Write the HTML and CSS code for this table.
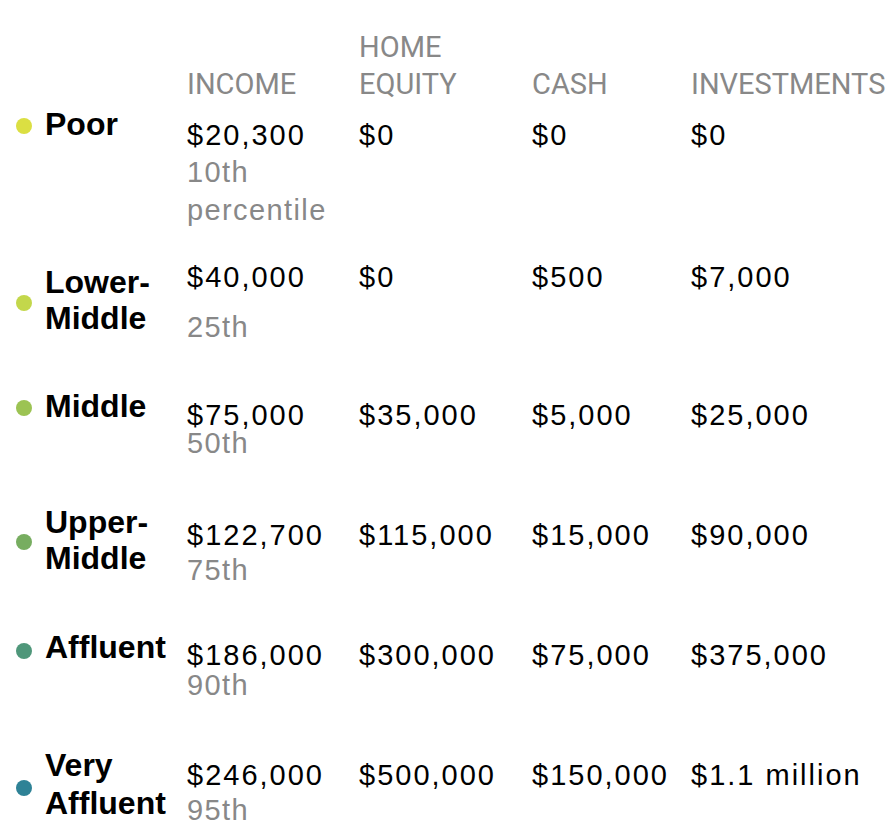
FILE: index.html
```html
<!DOCTYPE html>
<html lang="en">
<head>
<meta charset="utf-8">
<title>Wealth by class</title>
<link rel="stylesheet" href="styles.css">
</head>
<body>
<div class="table">
  <div class="row head">
    <div></div>
    <div class="th">INCOME</div>
    <div class="th">HOME EQUITY</div>
    <div class="th">CASH</div>
    <div class="th">INVESTMENTS</div>
  </div>

  <div class="row r1">
    <div class="label-cell"><span class="dot c1"></span><span class="name">Poor</span></div>
    <div class="cell"><div class="val">$20,300</div><div class="pct">10th percentile</div></div>
    <div class="cell"><div class="val">$0</div></div>
    <div class="cell"><div class="val">$0</div></div>
    <div class="cell"><div class="val">$0</div></div>
  </div>

  <div class="row r2">
    <div class="label-cell"><span class="dot c2"></span><span class="name">Lower-Middle</span></div>
    <div class="cell"><div class="val">$40,000</div><div class="pct">25th</div></div>
    <div class="cell"><div class="val">$0</div></div>
    <div class="cell"><div class="val">$500</div></div>
    <div class="cell"><div class="val">$7,000</div></div>
  </div>

  <div class="row r3">
    <div class="label-cell"><span class="dot c3"></span><span class="name">Middle</span></div>
    <div class="cell"><div class="val">$75,000</div><div class="pct">50th</div></div>
    <div class="cell"><div class="val">$35,000</div></div>
    <div class="cell"><div class="val">$5,000</div></div>
    <div class="cell"><div class="val">$25,000</div></div>
  </div>

  <div class="row r4">
    <div class="label-cell"><span class="dot c4"></span><span class="name">Upper-Middle</span></div>
    <div class="cell"><div class="val">$122,700</div><div class="pct">75th</div></div>
    <div class="cell"><div class="val">$115,000</div></div>
    <div class="cell"><div class="val">$15,000</div></div>
    <div class="cell"><div class="val">$90,000</div></div>
  </div>

  <div class="row r5">
    <div class="label-cell"><span class="dot c5"></span><span class="name">Affluent</span></div>
    <div class="cell"><div class="val">$186,000</div><div class="pct">90th</div></div>
    <div class="cell"><div class="val">$300,000</div></div>
    <div class="cell"><div class="val">$75,000</div></div>
    <div class="cell"><div class="val">$375,000</div></div>
  </div>

  <div class="row r6">
    <div class="label-cell"><span class="dot c6"></span><span class="name">Very Affluent</span></div>
    <div class="cell"><div class="val">$246,000</div><div class="pct">95th</div></div>
    <div class="cell"><div class="val">$500,000</div></div>
    <div class="cell"><div class="val">$150,000</div></div>
    <div class="cell"><div class="val">$1.1 million</div></div>
  </div>
</div>
</body>
</html>
```
FILE: styles.css
```css
html, body {
  margin: 0;
  padding: 0;
  background: #fff;
}
body {
  font-family: "Liberation Sans", Arial, sans-serif;
  color: #000;
  overflow: hidden;
}
.table {
  width: 896px;
}
.row {
  display: grid;
  grid-template-columns: 187px 172px 173px 159px 1fr;
  align-items: start;
  box-sizing: border-box;
}
.head {
  padding-top: 29px;
  height: 103px;
  align-items: end;
}
.th {
  font-family: Roboto, "Liberation Sans", sans-serif;
  font-size: 29px;
  line-height: 37px;
  color: #888;
}
.label-cell {
  display: flex;
  align-items: center;
}
.dot {
  flex: none;
  width: 16px;
  height: 16px;
  border-radius: 50%;
  margin-left: 16px;
  margin-right: 13px;
  margin-top: 4px;
}
.c1 { background: #dbdf42; }
.c2 { background: #c3d74b; }
.c3 { background: #9cc353; }
.c4 { background: #77ad60; }
.c5 { background: #4f977a; }
.c6 { background: #2e8296; }
.name {
  font-weight: 700;
  font-size: 32px;
  line-height: 36px;
  color: #000;
}
.val {
  font-size: 29px;
  line-height: 36px;
  letter-spacing: 2px;
  color: #000;
  white-space: nowrap;
}
.pct {
  font-size: 29px;
  line-height: 38px;
  letter-spacing: 1.4px;
  color: #888;
  width: 150px;
}

.r1 { height: 156px; }
.r1 .label-cell { margin-top: 3px; }
.r1 .cell { margin-top: 14px; }

.r2 { height: 129px; }
.r2 .label-cell { margin-top: 5px; }
.r2 .pct { margin-top: 13px; }
.r2 .dot { margin-top: 6px; }

.r3 { height: 116px; }
.r3 .cell { margin-top: 9px; }
.r3 .pct { margin-top: -9px; }

.r4 { height: 125px; }
.r4 .cell { margin-top: 13px; }
.r4 .pct { margin-top: -2px; }

.r5 { height: 117px; }
.r5 .cell { margin-top: 8px; }
.r5 .pct { margin-top: -7px; }
.r5 .dot { margin-top: 8px; }

.r6 { height: 94px; }
.r6 .name { line-height: 38px; }
.r6 .cell { margin-top: 11px; }
.r6 .pct { margin-top: -2px; }
.r6 .dot { margin-top: 8px; }
```
